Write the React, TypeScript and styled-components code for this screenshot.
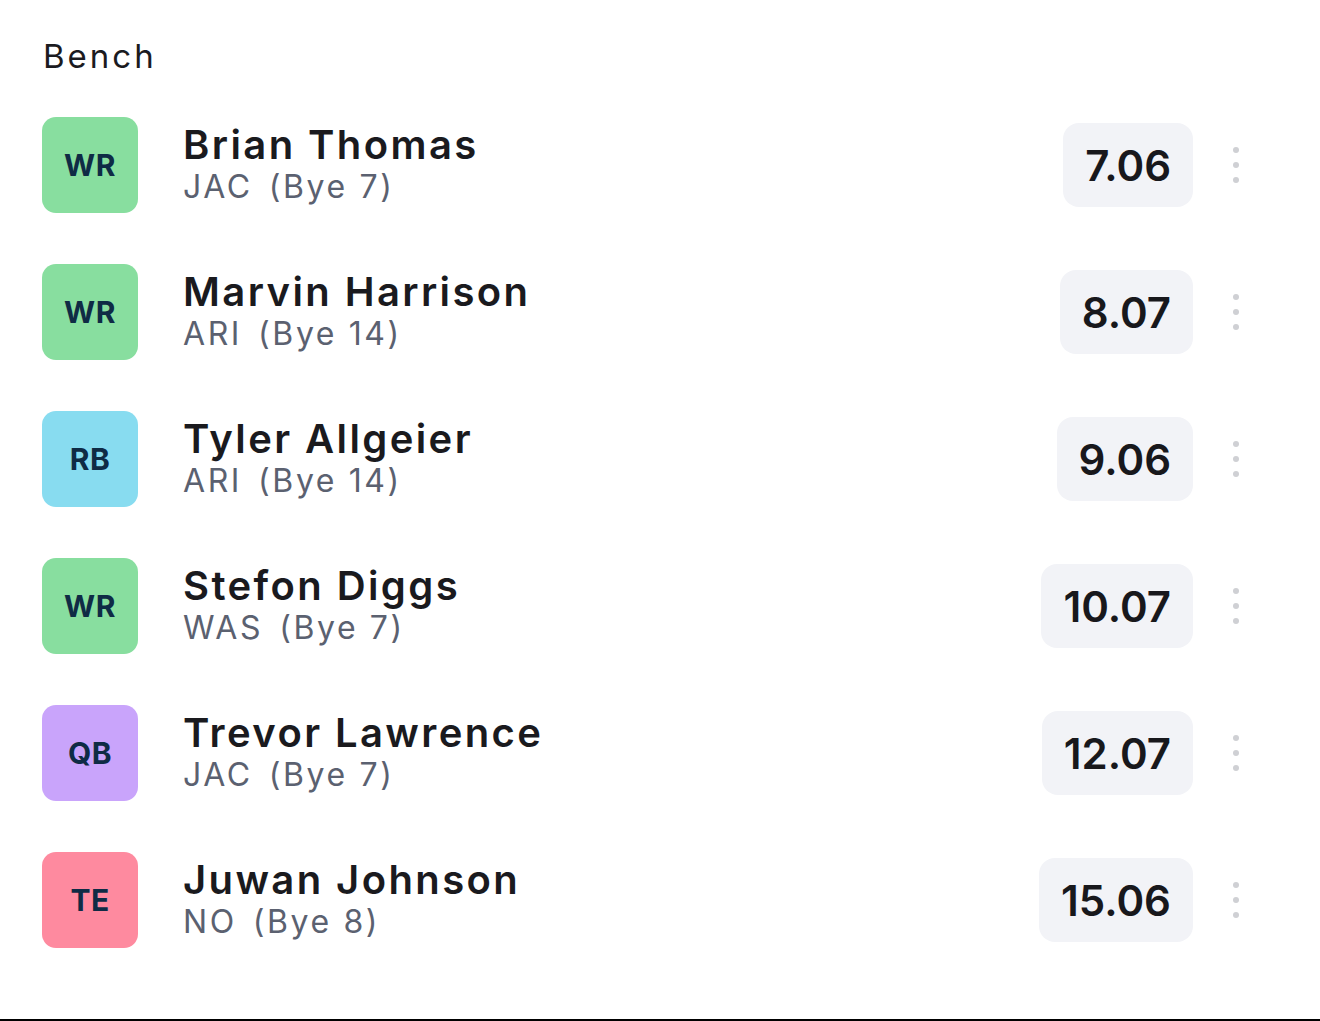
import React from "react";
import styled, { createGlobalStyle } from "styled-components";

const Global = createGlobalStyle`
  html, body { margin: 0; padding: 0; background: #ffffff; }
  body { font-family: "Inter", "Noto Sans", sans-serif; }
  * { box-sizing: border-box; }
`;

const Page = styled.div`
  min-height: 100vh;
  height: 1021px;
  padding: 36px 74px 0 42px;
  border-bottom: 2px solid #000;
  background: #fff;
`;

const Title = styled.h2`
  margin: 0 0 41px 1px;
  font-size: 33px;
  font-weight: 400;
  letter-spacing: 3px;
  color: #1b1b1f;
  line-height: 40px;
`;

const List = styled.div`
  display: flex;
  flex-direction: column;
  gap: 51px;
`;

const Row = styled.div`
  display: flex;
  align-items: center;
  height: 96px;
`;

const Badge = styled.div<{ $bg: string }>`
  width: 96px;
  height: 96px;
  flex: none;
  border-radius: 14px;
  background: ${(p) => p.$bg};
  display: flex;
  align-items: center;
  justify-content: center;
  font-size: 30px;
  font-weight: 700;
  letter-spacing: 0.5px;
  color: #0f2b45;
`;

const Info = styled.div`
  flex: 1;
  margin-left: 45px;
  display: flex;
  flex-direction: column;
  padding-bottom: 2px;
`;

const Name = styled.div`
  font-size: 40px;
  font-weight: 600;
  letter-spacing: 2.4px;
  color: #1a1a1e;
  line-height: 46px;
`;

const Sub = styled.div`
  font-size: 32px;
  font-weight: 400;
  letter-spacing: 2.6px;
  color: #5b6170;
  line-height: 38px;
`;

const Team = styled.span`
  margin-right: 16px;
`;

const Score = styled.div`
  height: 84px;
  padding: 0 22px;
  border-radius: 16px;
  background: #f2f3f7;
  display: flex;
  align-items: center;
  font-size: 42px;
  font-weight: 600;
  color: #18181c;
`;

const Menu = styled.div`
  width: 20px;
  margin-left: 33px;
  display: flex;
  flex-direction: column;
  align-items: center;
  gap: 9px;
`;

const Dot = styled.span`
  width: 6px;
  height: 6px;
  border-radius: 50%;
  background: #cfd0d4;
`;

const players = [
  { pos: "WR", bg: "#88de9f", name: "Brian Thomas", team: "JAC", bye: 7, score: "7.06" },
  { pos: "WR", bg: "#88de9f", name: "Marvin Harrison", team: "ARI", bye: 14, score: "8.07" },
  { pos: "RB", bg: "#88dcf0", name: "Tyler Allgeier", team: "ARI", bye: 14, score: "9.06" },
  { pos: "WR", bg: "#88de9f", name: "Stefon Diggs", team: "WAS", bye: 7, score: "10.07" },
  { pos: "QB", bg: "#c9a4fb", name: "Trevor Lawrence", team: "JAC", bye: 7, score: "12.07" },
  { pos: "TE", bg: "#fe8a9f", name: "Juwan Johnson", team: "NO", bye: 8, score: "15.06" },
];

export default function App() {
  return (
    <>
      <Global />
      <Page>
        <Title>Bench</Title>
        <List>
          {players.map((p) => (
            <Row key={p.name}>
              <Badge $bg={p.bg}>{p.pos}</Badge>
              <Info>
                <Name>{p.name}</Name>
                <Sub>
                  <Team>{p.team}</Team>(Bye {p.bye})
                </Sub>
              </Info>
              <Score>{p.score}</Score>
              <Menu>
                <Dot />
                <Dot />
                <Dot />
              </Menu>
            </Row>
          ))}
        </List>
      </Page>
    </>
  );
}
